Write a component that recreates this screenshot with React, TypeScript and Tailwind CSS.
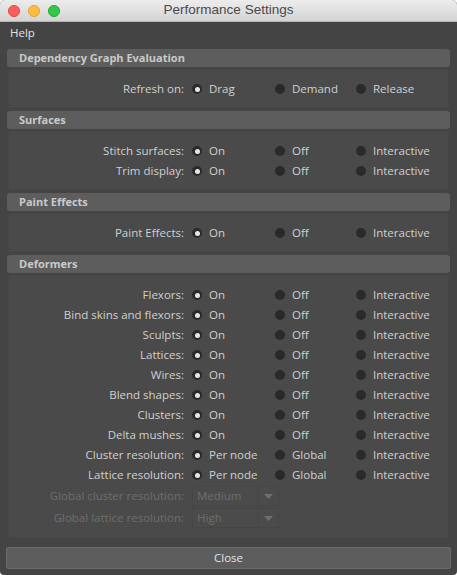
import React from "react";

type RadioRow = { kind: "radio"; label: string; options: string[]; selected: number };
type DropRow = { kind: "drop"; label: string; value: string };
type Row = RadioRow | DropRow;

const onOff = ["On", "Off", "Interactive"];

const SECTIONS: { title: string; rows: Row[] }[] = [
  {
    title: "Dependency Graph Evaluation",
    rows: [{ kind: "radio", label: "Refresh on:", options: ["Drag", "Demand", "Release"], selected: 0 }],
  },
  {
    title: "Surfaces",
    rows: [
      { kind: "radio", label: "Stitch surfaces:", options: onOff, selected: 0 },
      { kind: "radio", label: "Trim display:", options: onOff, selected: 0 },
    ],
  },
  {
    title: "Paint Effects",
    rows: [{ kind: "radio", label: "Paint Effects:", options: onOff, selected: 0 }],
  },
  {
    title: "Deformers",
    rows: [
      { kind: "radio", label: "Flexors:", options: onOff, selected: 0 },
      { kind: "radio", label: "Bind skins and flexors:", options: onOff, selected: 0 },
      { kind: "radio", label: "Sculpts:", options: onOff, selected: 0 },
      { kind: "radio", label: "Lattices:", options: onOff, selected: 0 },
      { kind: "radio", label: "Wires:", options: onOff, selected: 0 },
      { kind: "radio", label: "Blend shapes:", options: onOff, selected: 0 },
      { kind: "radio", label: "Clusters:", options: onOff, selected: 0 },
      { kind: "radio", label: "Delta mushes:", options: onOff, selected: 0 },
      { kind: "radio", label: "Cluster resolution:", options: ["Per node", "Global", "Interactive"], selected: 0 },
      { kind: "radio", label: "Lattice resolution:", options: ["Per node", "Global", "Interactive"], selected: 0 },
      { kind: "drop", label: "Global cluster resolution:", value: "Medium" },
      { kind: "drop", label: "Global lattice resolution:", value: "High" },
    ],
  },
];

function Radio({ on, text }: { on: boolean; text: string }) {
  return (
    <div className="flex items-center gap-[7px] pl-[7px]">
      <span className="flex h-[10px] w-[10px] items-center justify-center rounded-full bg-[#2a2a2a]">
        {on && <span className="h-[5px] w-[5px] rounded-full bg-[#e6e6e6]" />}
      </span>
      <span className="text-[#d0d0d0]">{text}</span>
    </div>
  );
}

function RowView({ row }: { row: Row }) {
  if (row.kind === "radio") {
    return (
      <div className="grid h-[20px] grid-cols-[176px_83px_81px_1fr] items-center">
        <span className="pr-px text-right text-[#d0d0d0]">{row.label}</span>
        {row.options.map((o, i) => (
          <Radio key={o} on={i === row.selected} text={o} />
        ))}
      </div>
    );
  }
  return (
    <div className="grid h-[22px] grid-cols-[176px_1fr] items-center">
      <span className="pr-px text-right text-[#6e6e6e]">{row.label}</span>
      <div className="ml-[7px] flex h-[20px] w-[87px] border border-[#464646] bg-[#4b4b4b]">
        <span className="flex-1 pl-[4px] leading-[18px] text-[#6e6e6e]">{row.value}</span>
        <span className="flex w-[20px] items-center justify-center border-l border-[#464646]">
          <svg width="9" height="5" viewBox="0 0 9 5">
            <path d="M0 0h9L4.5 5z" fill="#6f6f6f" />
          </svg>
        </span>
      </div>
    </div>
  );
}

export default function App() {
  return (
    <div className="h-[575px] w-[457px] bg-white" style={{ fontFamily: "'Open Sans', 'DejaVu Sans', sans-serif" }}>
      <div className="flex h-full flex-col overflow-hidden rounded-t-[5px] rounded-b-[4px] bg-[#444444] text-[11.5px] font-medium">
        {/* title bar */}
        <div className="relative flex h-[22px] shrink-0 items-center justify-center border-b border-[#b4b4b4] bg-gradient-to-b from-[#ececec] to-[#d4d4d4]">
          <div className="absolute left-[8px] top-[5px] flex gap-[8px]">
            <span className="h-[12px] w-[12px] rounded-full border border-[#e0443e] bg-[#fc605c]" />
            <span className="h-[12px] w-[12px] rounded-full border border-[#dea236] bg-[#fdbc40]" />
            <span className="h-[12px] w-[12px] rounded-full border border-[#1aab29] bg-[#34c84a]" />
          </div>
          <span className="text-[13.5px] font-normal text-[#4a4a4a]" style={{ fontFamily: "'Liberation Sans', Arial, sans-serif" }}>
            Performance Settings
          </span>
        </div>

        {/* menu */}
        <div className="flex h-[21px] shrink-0 items-center pl-[10px] text-[#e2e2e2]">Help</div>

        <div className="mt-[6px] flex flex-col px-[7px]">
          {SECTIONS.map((s) => (
            <div key={s.title} className="mb-[3px] flex flex-col">
              <div className="flex h-[18px] items-center rounded-[3px] bg-[#5d5d5d] pl-[12px] text-[11px] font-bold text-[#cacaca]">
                {s.title}
              </div>
              <div className="mx-px mt-[2px] flex flex-col border border-[#464646] bg-[#4a4a4a] pt-[9px] pb-[8px]">
                {s.rows.map((r) => (
                  <RowView key={r.label} row={r} />
                ))}
              </div>
            </div>
          ))}
        </div>

        <div className="mx-[6px] mt-[6px] flex h-[22px] items-center justify-center rounded-[2px] border border-[#6a6a6a] bg-[#5d5d5d] text-[#e2e2e2]">
          Close
        </div>
      </div>
    </div>
  );
}
